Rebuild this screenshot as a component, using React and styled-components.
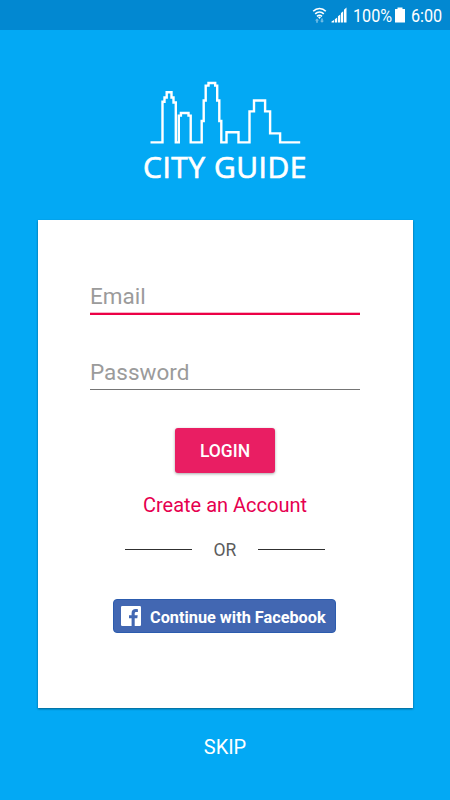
import React, { useState } from 'react';
import styled, { createGlobalStyle } from 'styled-components';

const GlobalStyle = createGlobalStyle`
    * {
        box-sizing: border-box;
    }

    body {
        margin: 0;
        font-family: Roboto, sans-serif;
    }
`;

const Screen = styled.div`
    display: flex;
    flex-direction: column;
    align-items: center;
    width: 450px;
    height: 800px;
    background-color: #03a9f4;
    overflow: hidden;
`;

const StatusBar = styled.div`
    display: flex;
    align-items: center;
    width: 100%;
    height: 30px;
    padding-left: 312px;
    background-color: #0288d1;
    color: white;
`;

const StatusIcon = styled.svg`
    flex: none;
    margin-right: ${props => props.$gap}px;
`;

const StatusText = styled.div`
    flex: none;
    width: ${props => props.$width}px;
    margin-right: ${props => props.$gap || 0}px;
    font-size: 19px;
    line-height: 30px;
    white-space: nowrap;
    transform: translateY(1px) scaleX(${props => props.$stretch});
    transform-origin: left center;
`;

const Brand = styled.header`
    display: flex;
    flex-direction: column;
    align-items: center;
    height: 190px;
    padding-top: 50px;
`;

const BrandName = styled.h1`
    margin: 1px 0 0;
    font-family: "Open Sans", sans-serif;
    font-size: 30px;
    font-weight: 500;
    line-height: 40px;
    letter-spacing: ${props => props.$spacing}px;
    color: white;
    white-space: nowrap;
    -webkit-text-stroke: 0.7px white;
`;

const Card = styled.main`
    display: flex;
    flex-direction: column;
    align-items: center;
    width: 375px;
    height: 488px;
    padding: 59px 52px 0;
    background-color: white;
    box-shadow: 0 1px 2px rgba(0, 0, 0, 0.45);
`;

const Field = styled.input`
    width: 270px;
    height: ${props => props.$active ? 36 : 34}px;
    margin: 0 0 ${props => props.$gap}px;
    padding: 0 0 ${props => props.$active ? 0 : 1}px;
    border: none;
    border-bottom: ${props => props.$active ? '2px solid #ec0046' : '1px solid #757575'};
    border-radius: 0;
    outline: none;
    background-color: transparent;
    box-shadow: ${props => props.$active ? 'inset 0 -1px #f7b5c8' : 'none'};
    font-family: Roboto, sans-serif;
    font-size: 22.5px;

    &::placeholder {
        color: #9b9b9b;
        opacity: 1;
    }
`;

const LoginButton = styled.button`
    width: 100px;
    height: 45px;
    padding: 1px 0 0;
    border: none;
    border-radius: 3px;
    background-color: #e91e63;
    box-shadow: 0 1px 3px rgba(0, 0, 0, 0.35);
    color: white;
    font-family: Roboto, sans-serif;
    font-size: 17.5px;
    font-weight: 500;
    cursor: pointer;
`;

const CreateLink = styled.a`
    margin-top: 17px;
    font-size: 20px;
    line-height: 30px;
    color: #e6004f;
    white-space: nowrap;
    cursor: pointer;
`;

const Divider = styled.div`
    display: flex;
    align-items: center;
    justify-content: space-between;
    width: 200px;
    height: 20px;
    margin-top: 20px;
    font-size: 17.5px;
    color: #5c5c5c;
`;

const Line = styled.span`
    width: 67px;
    height: 1px;
    margin-bottom: 2px;
    background-color: #303030;
`;

const FacebookButton = styled.button`
    display: flex;
    align-items: center;
    gap: 9px;
    width: 223px;
    height: 34px;
    margin-top: 39px;
    margin-right: 1px;
    padding: 0 0 0 7px;
    border: 1px solid #2c5cae;
    border-radius: 4px;
    background-color: #4267b2;
    color: white;
    font-family: Roboto, sans-serif;
    font-size: 16.3px;
    font-weight: 700;
    white-space: nowrap;
    cursor: pointer;
`;

const FacebookLabel = styled.span`
    padding-top: 2px;
`;

const SkipLink = styled.a`
    margin-top: 24px;
    font-size: 20px;
    line-height: 30px;
    color: white;
    cursor: pointer;
`;

const WifiIcon = () => (
    <StatusIcon $gap={4} width="15" height="18" viewBox="0 0 15 18" fill="none">
        <path d="M1.2 5.2C4.8 1.5 10.2 1.5 13.8 5.2M3.2 7.9C5.7 5.4 9.3 5.4 11.8 7.9M5 10.3C6.5 9 8.5 9 10 10.3" stroke="white" strokeWidth="1.6" />
        <path d="M6 11.1C6.9 10.4 8.1 10.4 9 11.1L7.5 12.9Z" fill="white" />
        <path d="M5 12.5L7 14.6H5.8V16.8H4.2V14.6H3ZM10 16.8L8 14.7H9.2V12.5H10.8V14.7H12Z" fill="#75bfe7" />
    </StatusIcon>
);

const SignalIcon = () => (
    <StatusIcon $gap={6} width="16" height="16" viewBox="0 0 16 16" fill="white">
        <path d="M0.5 15.5V14.5L3 13V15.5ZM3.8 12.2L6.2 10.5V15.5H3.8ZM7 9.2L9.3 7.6V15.5H7ZM10 6L12.2 4.3V15.5H10ZM13 2.7L15.5 0.5V15.5H13Z" />
    </StatusIcon>
);

const BatteryIcon = () => (
    <StatusIcon $gap={6} width="10" height="16" viewBox="0 0 10 16" fill="white">
        <path d="M2.5 0.5H7.5V2H10V15.5H0V2H2.5Z" />
    </StatusIcon>
);

const Skyline = () => (
    <svg width="152" height="66" viewBox="149.5 80 152 66" fill="none">
        <path
            d="M151 142.4H163V101.7H165V97.5H167.2V92.2H172V97.5H174V102.5H176.3V142.4H179.3V115.6H181.4V113H189V115.6H191.2V142.4H202.2V121H204.2V100.5H206.2V85.6H209V83H215.7V85.6H217.7V100.5H219.8V121H221.8V142.4H227V132.3H239V142.4H250V111.4H254.5V100.5H265.6V111.4H270.6V133.4H280.6V142.4H300.7"
            stroke="white"
            strokeWidth="2.4"
        />
    </svg>
);

const FacebookIcon = () => (
    <svg width="20" height="20" viewBox="0 0 20 20">
        <rect width="20" height="20" rx="1.2" fill="white" />
        <path d="M13.7 20V12.3H16.3L16.7 9.3H13.7V7.4C13.7 6.5 14 5.9 15.3 5.9H16.9V3.2C16.5 3.1 15.6 3 14.6 3C12.2 3 10.6 4.4 10.6 7V9.3H8V12.3H10.6V20Z" fill="#4267b2" />
    </svg>
);

const App = () => {
    const [email, setEmail] = useState('');
    const [password, setPassword] = useState('');

    return (
        <Screen>
            <GlobalStyle />
            <StatusBar>
                <WifiIcon />
                <SignalIcon />
                <StatusText $width={37} $gap={5} $stretch={0.85}>100%</StatusText>
                <BatteryIcon />
                <StatusText $width={32} $stretch={0.85}>6:00</StatusText>
            </StatusBar>
            <Brand>
                <Skyline />
                <BrandName $spacing={0.5}>CITY GUIDE</BrandName>
            </Brand>
            <Card>
                <Field
                    $active
                    $gap={41}
                    type="email"
                    placeholder="Email"
                    value={email}
                    onChange={({ target }) => setEmail(target.value)}
                />
                <Field
                    $gap={38}
                    type="password"
                    placeholder="Password"
                    value={password}
                    onChange={({ target }) => setPassword(target.value)}
                />
                <LoginButton>LOGIN</LoginButton>
                <CreateLink>Create an Account</CreateLink>
                <Divider>
                    <Line />
                    OR
                    <Line />
                </Divider>
                <FacebookButton>
                    <FacebookIcon />
                    <FacebookLabel>Continue with Facebook</FacebookLabel>
                </FacebookButton>
            </Card>
            <SkipLink>SKIP</SkipLink>
        </Screen>
    );
};

export default App;
